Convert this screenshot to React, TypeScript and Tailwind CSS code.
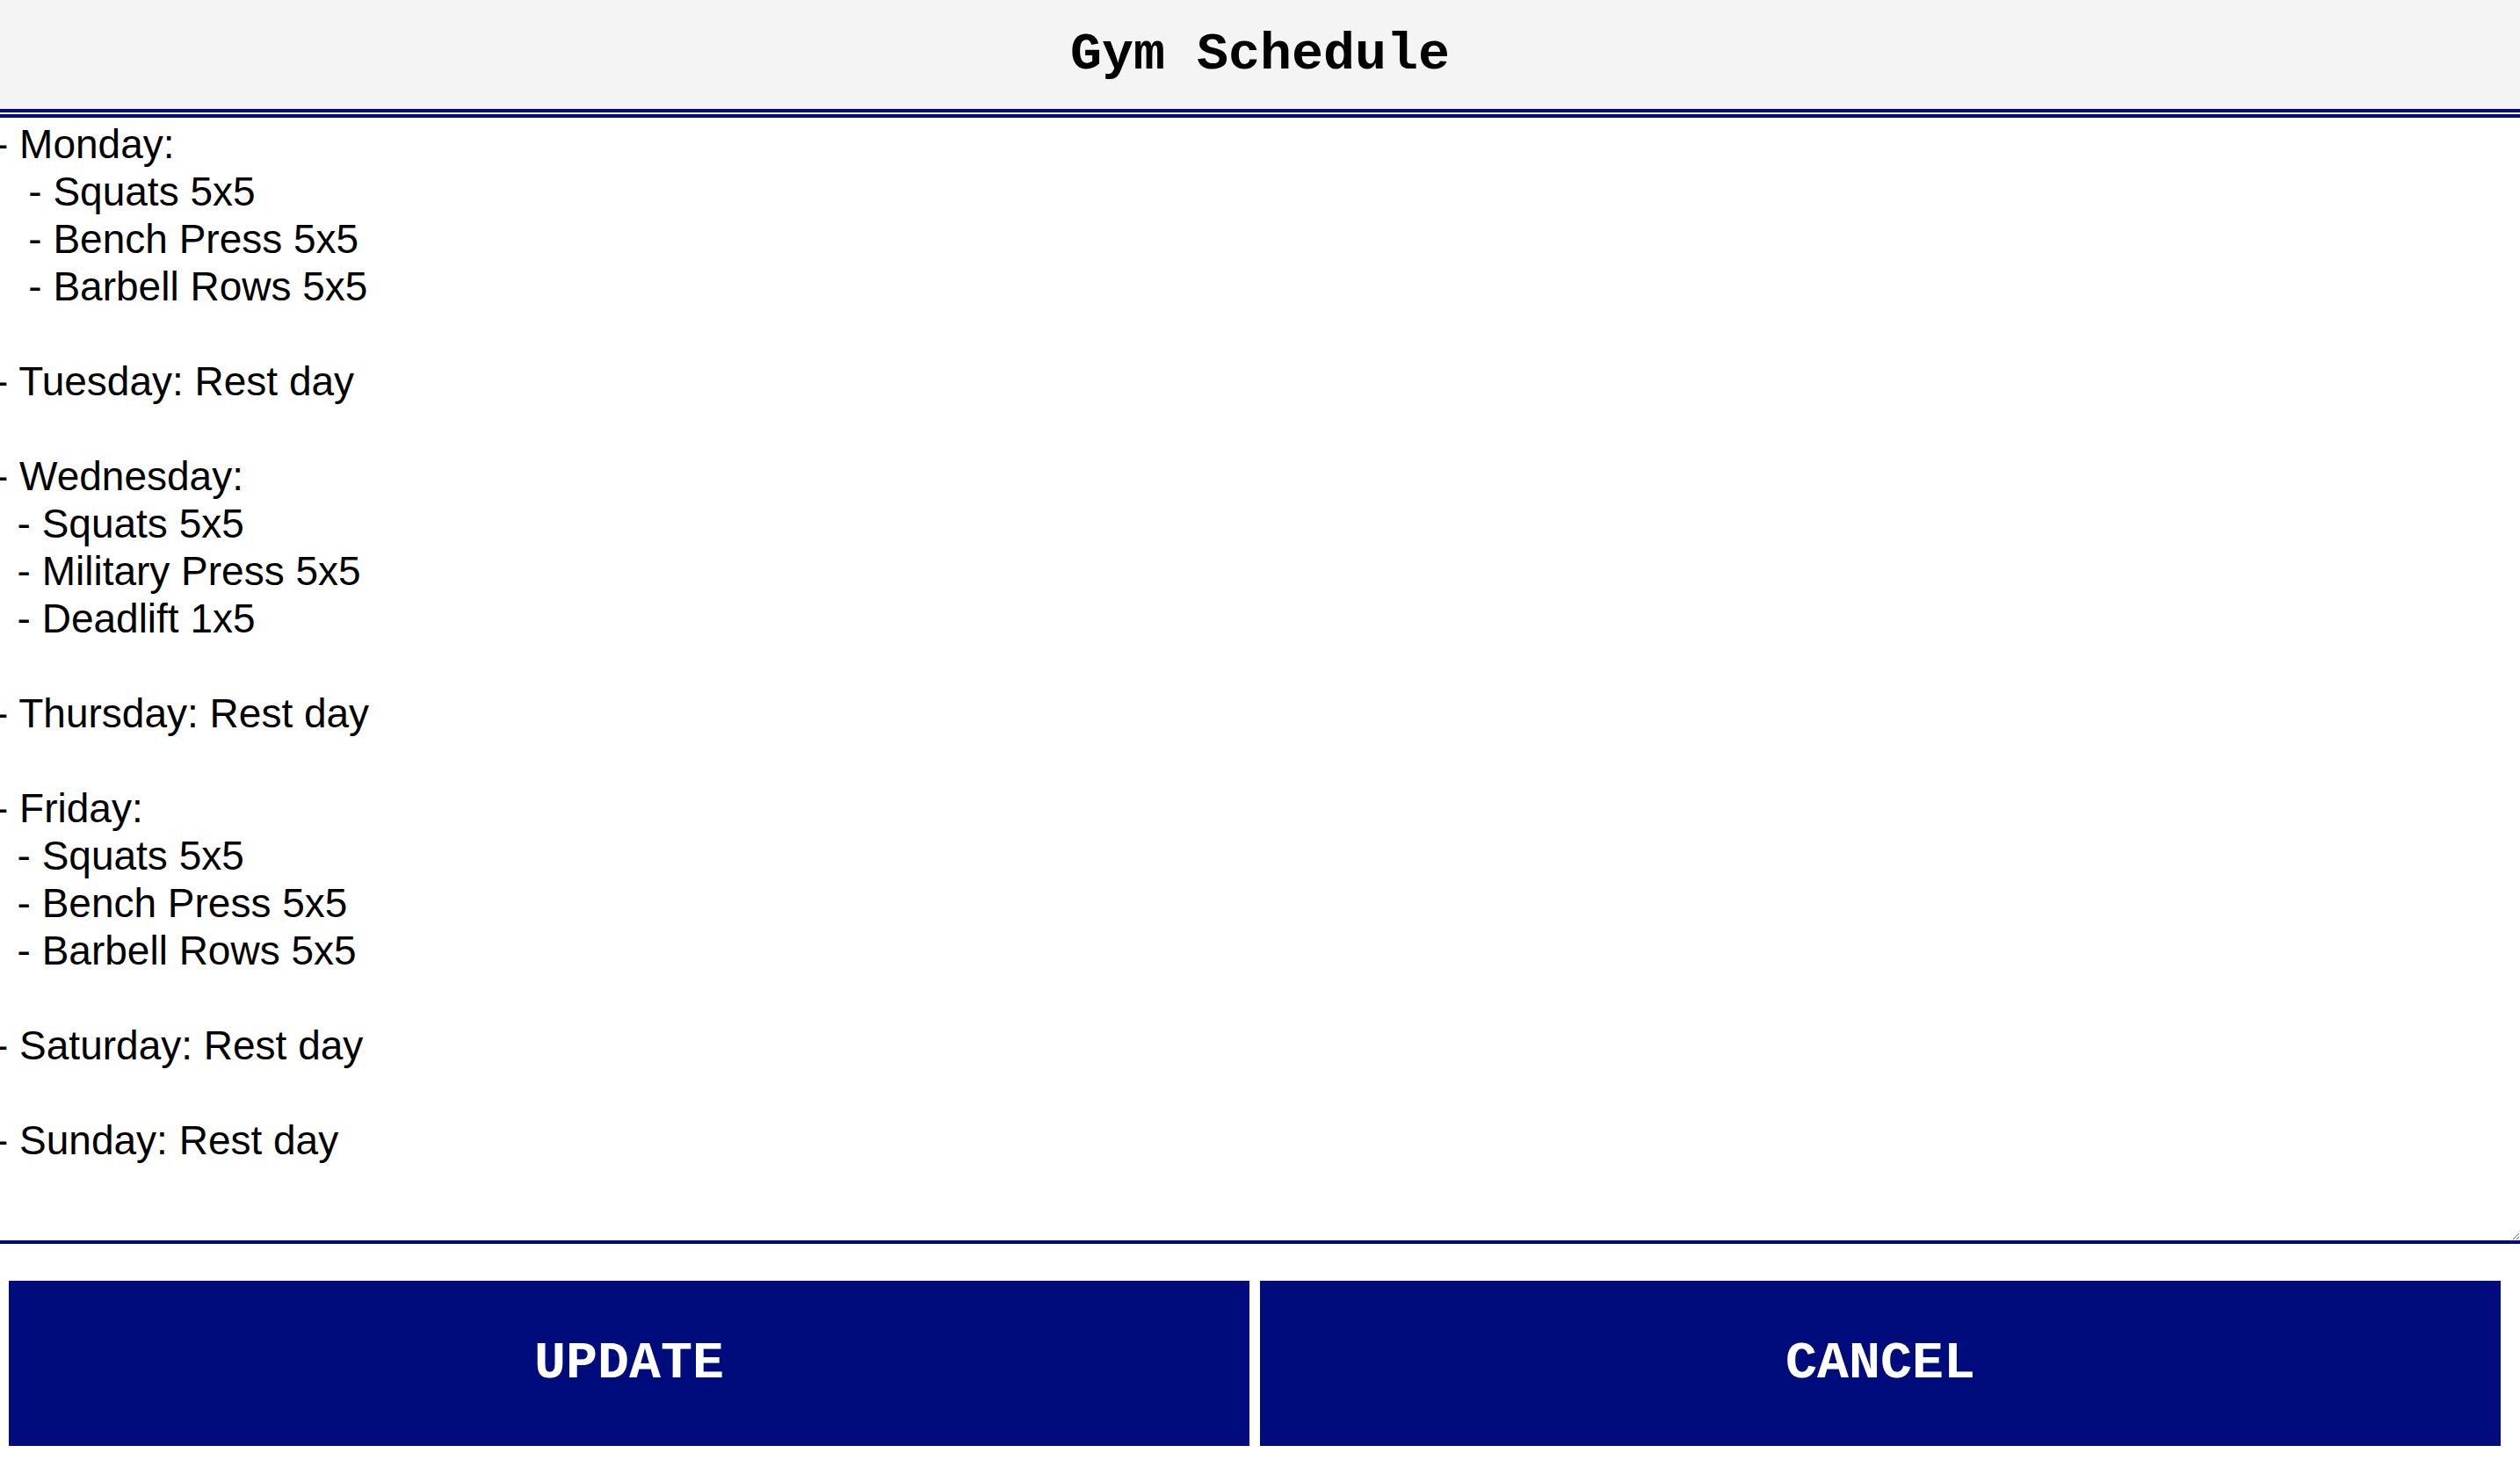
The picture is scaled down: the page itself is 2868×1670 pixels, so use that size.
const schedule = [
  '- Monday:',
  '   - Squats 5x5',
  '   - Bench Press 5x5',
  '   - Barbell Rows 5x5',
  '',
  '- Tuesday: Rest day',
  '',
  '- Wednesday:',
  '  - Squats 5x5',
  '  - Military Press 5x5',
  '  - Deadlift 1x5',
  '',
  '- Thursday: Rest day',
  '',
  '- Friday:',
  '  - Squats 5x5',
  '  - Bench Press 5x5',
  '  - Barbell Rows 5x5',
  '',
  '- Saturday: Rest day',
  '',
  '- Sunday: Rest day',
].join('\n')

function ActionButton({ label }: { label: string }) {
  return (
    <button
      type="button"
      className="w-[1412px] h-[188px] bg-[#000c7b] text-white text-[60px] font-bold
                 font-['Liberation_Mono','Courier_New',monospace] cursor-pointer"
    >
      {label}
    </button>
  )
}

export default function App() {
  return (
    <div className="min-h-screen bg-white overflow-hidden">
      <header className="h-[128px] bg-[#f4f4f4] border-b-4 border-[#000c7b] flex items-center justify-center">
        <h1 className="text-[60px] font-bold text-black font-['Liberation_Mono','Courier_New',monospace]">
          Gym Schedule
        </h1>
      </header>

      {/* text starts a few px left of the page edge, as in the reference */}
      <textarea
        defaultValue={schedule}
        spellCheck={false}
        className="block mt-[2px] -ml-[6px] w-[calc(100%+6px)] h-[1286px] border-y-4 border-x-0 border-[#000c7b]
                   pt-[3px] px-0 text-[46px] leading-[54px] text-black bg-white outline-none
                   font-['Liberation_Sans',Arial,sans-serif]"
      />

      <div className="flex gap-[12px] pl-[10px] pt-[42px]">
        <ActionButton label="UPDATE" />
        <ActionButton label="CANCEL" />
      </div>
    </div>
  )
}
